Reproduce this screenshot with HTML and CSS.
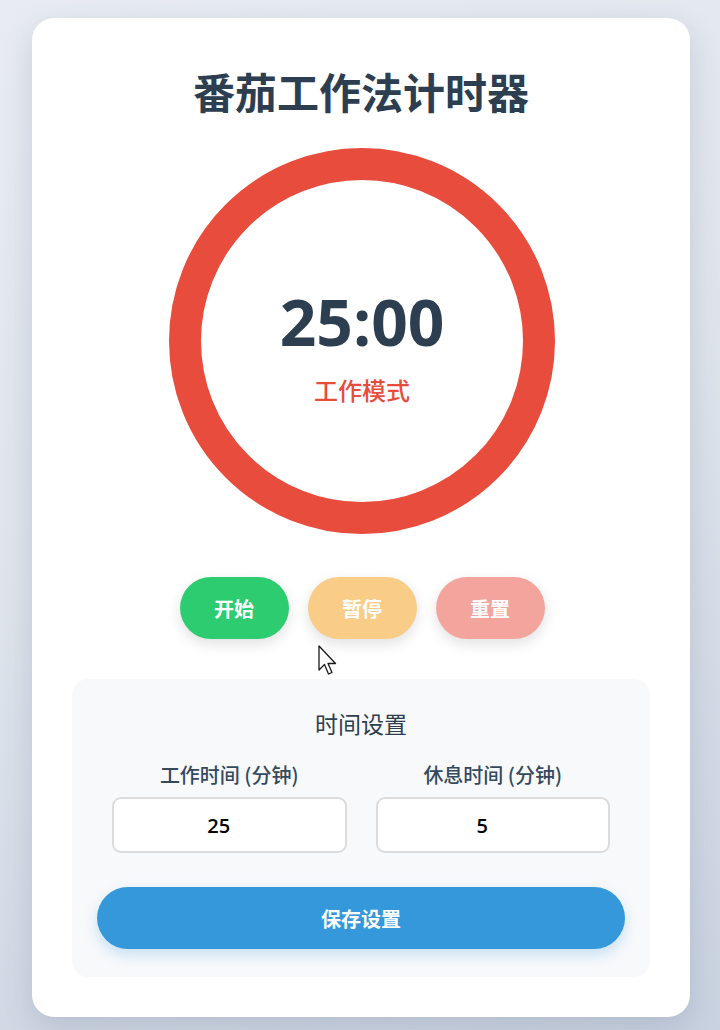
FILE: index.html
```html
<!DOCTYPE html>
<html lang="zh-CN">
<head>
<meta charset="utf-8">
<title>番茄工作法计时器</title>
<link rel="stylesheet" href="styles.css">
</head>
<body>
<div class="card">
  <h1 class="title">番茄工作法计时器</h1>
  <div class="ring">
    <div class="time">25:00</div>
    <div class="mode">工作模式</div>
  </div>
  <div class="controls">
    <button class="btn btn-start">开始</button>
    <button class="btn btn-pause">暂停</button>
    <button class="btn btn-reset">重置</button>
  </div>
  <div class="settings">
    <h2 class="settings-title">时间设置</h2>
    <div class="fields">
      <div class="field">
        <label class="field-label">工作时间 (分钟)</label>
        <input class="field-input" type="number" value="25">
      </div>
      <div class="field">
        <label class="field-label">休息时间 (分钟)</label>
        <input class="field-input" type="number" value="5">
      </div>
    </div>
    <button class="save">保存设置</button>
  </div>
</div>
<svg class="cursor" width="22" height="34" viewBox="0 0 22 34"><path d="M1 1 L1 25 L6.5 19.5 L10.5 29 L14 27.5 L10 18.5 L17.5 18.5 Z" fill="#fff" stroke="#1a1a1a" stroke-width="1.3" stroke-linejoin="round"/></svg>
</body>
</html>
```

FILE: styles.css
```css
html, body {
  margin: 0;
  padding: 0;
}
body {
  min-height: 1030px;
  background: linear-gradient(160deg, #e8ecf2 0%, #dfe4ec 45%, #c9d2e0 100%);
  font-family: "Open Sans", "Noto Sans CJK SC", sans-serif;
  padding: 18px 0 14px;
  box-sizing: border-box;
  position: relative;
}
.card {
  width: 658px;
  margin: 0 auto 0 32px;
  box-sizing: border-box;
  background: #fff;
  border-radius: 22px;
  padding: 40px;
  box-shadow: 0 10px 30px rgba(60, 80, 110, 0.18);
  display: flex;
  flex-direction: column;
  align-items: center;
}
.title {
  margin: 8px 0 32px;
  font-size: 42px;
  line-height: 50px;
  font-weight: 700;
  color: #2c3e50;
  font-family: "Noto Sans CJK SC", sans-serif;
}
.ring {
  width: 386px;
  height: 386px;
  box-sizing: border-box;
  border: 32px solid #e74c3c;
  border-radius: 50%;
  display: flex;
  flex-direction: column;
  align-items: center;
  justify-content: center;
  padding-top: 12px;
  margin-left: 2px;
}
.time {
  font-size: 64px;
  line-height: 64px;
  font-weight: 700;
  color: #2c3e50;
}
.mode {
  margin-top: 22px;
  font-size: 24px;
  line-height: 28px;
  font-weight: 500;
  color: #e74c3c;
  font-family: "Noto Sans CJK SC", sans-serif;
}
.controls {
  display: flex;
  gap: 19px;
  margin-top: 43px;
  margin-left: 2px;
}
.btn {
  width: 109px;
  height: 62px;
  border: none;
  border-radius: 31px;
  color: #fff;
  font-size: 20px;
  font-weight: 700;
  font-family: "Noto Sans CJK SC", sans-serif;
  box-shadow: 0 5px 14px rgba(0, 0, 0, 0.12);
  padding: 0;
}
.btn-start { background: #2ecc71; }
.btn-pause { background: #f9cd88; }
.btn-reset { background: #f3a59d; }
.settings {
  margin-top: 40px;
  width: 100%;
  box-sizing: border-box;
  background: #f8f9fb;
  border-radius: 16px;
  padding: 25px 25px 28px;
  display: flex;
  flex-direction: column;
  align-items: center;
}
.settings-title {
  margin: 4px 0 0;
  font-size: 23px;
  line-height: 30px;
  font-weight: 400;
  color: #2c3e50;
  font-family: "Noto Sans CJK SC", sans-serif;
}
.fields {
  display: flex;
  gap: 29px;
  width: 100%;
  box-sizing: border-box;
  padding: 0 15px 0 15px;
  margin-top: 24px;
}
.field {
  flex: 1;
  display: flex;
  flex-direction: column;
  align-items: center;
}
.field-label {
  font-size: 20px;
  line-height: 26px;
  font-weight: 500;
  color: #34495e;
  font-family: "Noto Sans CJK SC", sans-serif;
}
.field-input {
  margin-top: 9px;
  width: 100%;
  height: 56px;
  box-sizing: border-box;
  border: 2px solid #dcdcdc;
  border-radius: 9px;
  background: #fff;
  text-align: center;
  font-size: 20px;
  font-weight: 600;
  font-family: "Open Sans", sans-serif;
  color: #000;
  outline: none;
  padding: 0 8px 0 2px;
}
.save {
  margin-top: 34px;
  width: 100%;
  height: 62px;
  border: none;
  border-radius: 31px;
  background: #3498db;
  color: #fff;
  font-size: 20px;
  font-weight: 700;
  font-family: "Noto Sans CJK SC", sans-serif;
  box-shadow: 0 6px 14px rgba(52, 152, 219, 0.25);
}
.cursor {
  position: absolute;
  left: 318px;
  top: 645px;
}
```
